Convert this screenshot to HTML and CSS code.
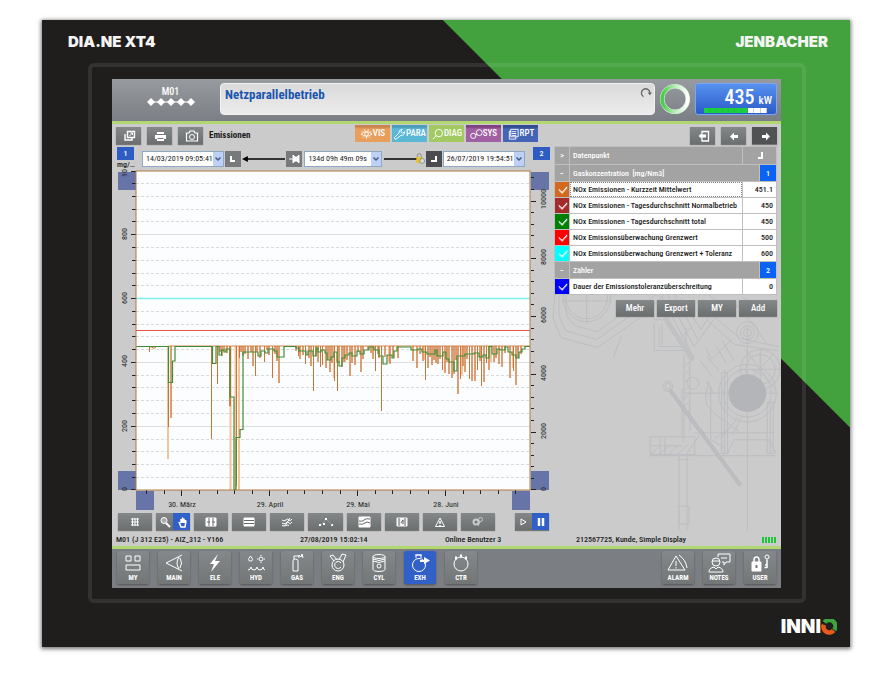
FILE: index.html
```html
<!DOCTYPE html>
<html lang="de">
<head>
<meta charset="utf-8">
<title>DIA.NE XT4</title>
<link rel="stylesheet" href="styles.css">
</head>
<body>
<div class="device">
  <header class="brand-bar"><span class="brand">DIA.NE XT4</span><span class="brand">JENBACHER</span></header>
  <div class="bezel">
    <main class="screen">
      <div class="topbar">
        <div class="module">
          <span>M01</span>
          <svg width="48" height="8" viewBox="0 0 48 8"><path d="M4 4H44" stroke="#fff"/><path fill="#fff" d="M4 0l4 4-4 4-4-4zM14 0l4 4-4 4-4-4zM24 0l4 4-4 4-4-4zM34 0l4 4-4 4-4-4zM44 0l4 4-4 4-4-4z"/></svg>
        </div>
        <div class="message"><span>Netzparallelbetrieb</span>
          <svg width="12" height="12" viewBox="0 0 12 12"><path d="M3.5 9.8A4.3 4.3 0 1 1 10 6" fill="none" stroke="#666" stroke-width="1.3"/><path d="M7.6 5.5h4.4L9.8 8.3z" fill="#666"/></svg>
        </div>
        <svg class="ring" viewBox="0 0 32 32"><defs><linearGradient id="rg"><stop offset="0" stop-color="#3fce3f"/><stop offset=".5" stop-color="#b9ecba"/><stop offset="1" stop-color="#fff"/></linearGradient></defs><circle cx="16" cy="16" r="12.8" fill="none" stroke="#d5e5d5" stroke-width="4.6"/><circle cx="16" cy="16" r="12.8" fill="none" stroke="url(#rg)" stroke-width="3.4"/></svg>
        <div class="power">
          <div class="power-value">435 <small>kW</small></div>
          <div class="power-bar"><i></i><i></i><i></i><i></i><i></i><i></i><i></i><i class="off"></i><i class="off"></i><i class="off"></i></div>
        </div>
      </div>

      <div class="toolbar">
        <div class="tools">
          <button class="tool" aria-label="Fenster"><svg viewBox="0 0 24 16"><path d="M10.500 3.500h7v6h-7zM8 6v6h7v-2" fill="none" stroke="#fff" stroke-width="1.400"/><path d="M12.500 8l3-3M13.500 5h2v2" fill="none" stroke="#fff"/></svg></button>
          <button class="tool" aria-label="Drucken"><svg viewBox="0 0 24 16"><path d="M9 4h7v3H9zM7 7h11v4H7zM9 10h7v3H9z" fill="#fff"/><path d="M9 6.500h7M9.500 10.500h6" stroke="#777"/></svg></button>
          <button class="tool" aria-label="Foto"><svg viewBox="0 0 24 16"><path d="M7.500 5h2.500l1-2h4l1 2h2.500v8h-11z" fill="none" stroke="#fff" stroke-width="1.200"/><circle cx="13" cy="9" r="2.500" fill="none" stroke="#fff"/></svg></button>
          <h1>Emissionen</h1>
        </div>
        <nav class="tabs">
          <a href="#vis" class="vis"><svg viewBox="0 0 14 12"><path d="M1 6q6-5 12 0q-6 5-12 0zM2 3l1 1M5 1l.5 2M9 1l-.5 2M12 3l-1 1M3 10l1-1M7 11V9M11 10l-1-1"/><circle cx="7" cy="6" r="2"/></svg>VIS</a>
          <a href="#para" class="para"><svg viewBox="0 0 14 12"><path d="M1.500 10l5-5q-.5-3 2.500-4l1 0-1.500 2 .5 1.500 1.500.5 2-1.500q.5 4-4 4l-5 4q-2 .5-2-1.500z"/></svg>PARA</a>
          <a href="#diag" class="diag"><svg viewBox="0 0 14 12"><circle cx="8.500" cy="5" r="4"/><path d="M5.500 8L2 11.500"/></svg>DIAG</a>
          <a href="#sys" class="sys"><svg viewBox="0 0 14 12"><circle cx="3.500" cy="8" r="2.800"/><circle cx="10" cy="4.500" r="3.200"/><path d="M6 7l2-1"/></svg>SYS</a>
          <a href="#rpt" class="rpt"><svg viewBox="0 0 14 12"><path d="M4 1h8v8h-8zM4 3H2.500v8.500h7V9M5 3.500h5M5 5.500h5M5 7.500h5"/></svg>RPT</a>
        </nav>
        <div class="history">
          <button class="tool" aria-label="Verlassen"><svg viewBox="0 0 24 16"><path d="M11 5V3.500h6.500v9.500H11v-2" fill="none" stroke="#fff" stroke-width="1.300"/><path d="M7.500 8l4-3.500v2H15v3h-3.500v2z" fill="#fff"/></svg></button>
          <button class="tool" aria-label="Zurück"><svg viewBox="0 0 24 16"><path d="M8 8.500l4-4V7h4v3h-4v2.500z" fill="#fff"/></svg></button>
          <button class="tool dark" aria-label="Vor"><svg viewBox="0 0 24 16"><path d="M17 8.500l-4-4V7H9v3h4v2.500z" fill="#fff"/></svg></button>
        </div>
      </div>

      <div class="content">
        <svg class="engine" viewBox="545 290 236 245" aria-hidden="true">
          <g fill="none" stroke="#bcbdc0">
            <path d="M553 296l-2 24 8 20 37 10 44-31 24-23M557 298l0 20 7 15 31 9 38-27 22-19M563 300l2 18 8 10 23 6 30-22"/>
            <circle cx="585" cy="300" r="24"/><circle cx="585" cy="300" r="21"/><path d="M585 296v30M560 303h50"/>
            <path d="M659 296l34 64M666 296l27 53 20-27M673 296l24 46M680 300l20 32 17-28-20-16M690 330l-10 10M612 360l8-22"/>
            <path d="M653 322h16M653 326v27h32v-4h-27v-20M661 326v21M685 330v24l8 5M683 357v88M689 364v70M683 370l6-6M683 378l6-6M683 386l6-6M683 394l6-6M683 402l6-6M683 410l6-6M683 418l6-6"/>
            <path d="M705 350l6 12 20-20M700 364l12 16M706 359l12 14M716 350l10 16M722 344l12 20"/>
            <circle cx="692" cy="386" r="6"/>
            <path d="M706 322l28 25 43 6M712 318l28 23 38 8M723 320l10-14 18 12M740 310l26 35M742 300l25 9 10-8"/>
            <circle cx="747" cy="335" r="11"/><circle cx="747" cy="335" r="7"/><circle cx="747" cy="335" r="4"/>
            <circle cx="760" cy="372" r="20"/><circle cx="760" cy="372" r="15"/><path d="M745 352l30 40M774 356l-28 30M760 351v42M738 372h42"/>
            <circle cx="747" cy="396" r="29"/><circle cx="747" cy="396" r="24"/>
            <path d="M683 396h95M709 384q-6 12-3 24l12 12 20 14M706 384l7 12M747 330v205"/>
            <path d="M721 375h6v82h-6zM724 372v85M767 405h6v52h-6zM770 405v52M710 390v53l14 8M730 430l-16 12M738 420l-18 22M742 418l-10 20"/>
            <path d="M649 440h45v18h-45zM659 440v18M664 440v18M649 449h32M649 458l10-9M658 458l10-9M667 458l10-9M676 458l12-11M685 458l14-20M649 459h126M694 436h80M733 443h36l7 14M733 443l-6 14"/>
            <path d="M678 460v75M686 460v75M676 463h12M676 510h12v18h-10v-18M681 392v50"/>
            <circle cx="667" cy="389" r="5"/><circle cx="667" cy="389" r="3"/>
          </g>
          <circle cx="747" cy="396" r="19" fill="#b3b5b8"/>
          <path d="M669 393l71 96" stroke="#b9babd" stroke-width="4"/><path d="M669 393l71 96" stroke="#c1c2c4" stroke-width="1"/><path d="M664 320l28 43" stroke="#c0c1c3" stroke-width="5"/>
        </svg>

        <section class="trend">
          <div class="range">
            <div class="axis-tag"><button>1</button><span>mg/…</span></div>
            <div class="range-fields">
              <label class="combo"><select aria-label="Von"><option>14/03/2019 09:05:41</option></select><svg viewBox="0 0 10 14"><path d="M2.500 5.500L5 8l2.500-2.500"/></svg></label>
              <button class="mini" aria-label="Anfang"><svg viewBox="0 0 16 16"><path d="M6 5v5h4" fill="none" stroke="#fff" stroke-width="2"/></svg></button>
              <svg class="span-line" viewBox="0 0 44 16"><path d="M4 8H44" stroke="#000" stroke-width="1.400"/><path d="M0 8l6-3v6z"/></svg>
              <button class="mini" aria-label="Fixieren"><svg viewBox="0 0 16 16"><path d="M3 8h4M7 4l2 2h2l2-2v8l-2-2H9l-2 2z" fill="#fff" stroke="#fff"/></svg></button>
              <label class="combo mid"><select aria-label="Zeitspanne"><option>134d 09h 49m 09s</option></select><svg viewBox="0 0 10 14"><path d="M2.500 5.500L5 8l2.500-2.500"/></svg></label>
              <svg class="span-line" viewBox="0 0 44 16"><path d="M2 8H37" stroke="#000" stroke-width="1.400"/><path d="M36 6V4.500a2 2 0 0 1 4 0V9" fill="none" stroke="#888"/><rect x="35" y="6" width="5" height="6" fill="#e8c321"/><circle cx="41" cy="10" r="2.500" fill="#ddd" stroke="#777" stroke-width=".7"/></svg>
              <button class="mini dark" aria-label="Ende"><svg viewBox="0 0 16 16"><path d="M10 5v5H5" fill="none" stroke="#fff" stroke-width="2"/></svg></button>
              <label class="combo"><select aria-label="Bis"><option>26/07/2019 19:54:51</option></select><svg viewBox="0 0 10 14"><path d="M2.500 5.500L5 8l2.500-2.500"/></svg></label>
            </div>
            <div class="axis-tag"><button>2</button></div>
          </div>
          <svg class="chart" viewBox="112 168 442 344">
            <rect x="136" y="171" width="394" height="319" fill="#fbfdff"/>
            <path d="M136 234.500h394M136 298.500h394M136 362.500h394M136 426.500h394" stroke="#dedfe3"/>
            <path d="M136 183.500h394M136 196.500h394M136 209.500h394M136 221.500h394M136 247.500h394M136 260.500h394M136 273.500h394M136 285.500h394M136 311.500h394M136 324.500h394M136 336.500h394M136 349.500h394M136 375.500h394M136 387.500h394M136 400.500h394M136 413.500h394M136 439.500h394M136 451.500h394M136 464.500h394M136 477.500h394" stroke="#d9dadc" stroke-dasharray="3 2"/>
            <g fill="#6774a8"><path d="M118 172h18v18h-18zM118 471h18v19h-18zM136 491h18v19h-18zM531 172h18v18h-18zM531 471h18v19h-18zM512 491h18v19h-18z"/></g>
            <path d="M131 171.500h5M132 183.500h4M132 196.500h4M132 209.500h4M132 221.500h4M131 234.500h5M132 247.500h4M132 260.500h4M132 273.500h4M132 285.500h4M131 298.500h5M132 311.500h4M132 324.500h4M132 336.500h4M132 349.500h4M131 362.500h5M132 375.500h4M132 387.500h4M132 400.500h4M132 413.500h4M131 426.500h5M132 439.500h4M132 451.500h4M132 464.500h4M132 477.500h4M131 489.500h5" stroke="#222"/>
            <path d="M531 177.500h3M531 189.500h3M531 201.500h5M531 212.500h3M531 224.500h3M531 235.500h3M531 247.500h3M531 258.500h5M531 270.500h3M531 281.500h3M531 293.500h3M531 304.500h3M531 316.500h5M531 328.500h3M531 339.500h3M531 351.500h3M531 362.500h3M531 374.500h5M531 385.500h3M531 397.500h3M531 408.500h3M531 420.500h3M531 432.500h5M531 443.500h3M531 455.500h3M531 466.500h3M531 478.500h3M531 489.500h5" stroke="#222"/>
            <path d="M146.500 490v4M164.500 490v4M181.500 490v6M199.500 490v4M217.500 490v4M234.500 490v4M252.500 490v4M269.500 490v6M287.500 490v4M304.500 490v4M322.500 490v4M340.500 490v4M357.500 490v6M375.500 490v4M392.500 490v4M410.500 490v4M428.500 490v4M445.500 490v6M463.500 490v4M480.500 490v4M498.500 490v4M515.500 490v4" stroke="#222"/>
            <g class="tick-text" text-anchor="middle">
              <text transform="translate(127 173) rotate(-90)">10</text><text transform="translate(127 234) rotate(-90)">800</text><text transform="translate(127 298) rotate(-90)">600</text><text transform="translate(127 361) rotate(-90)">400</text><text transform="translate(127 426) rotate(-90)">200</text><text transform="translate(127 489) rotate(-90)">0</text>
              <text transform="translate(546 199) rotate(-90)">10000</text><text transform="translate(546 257) rotate(-90)">8000</text><text transform="translate(546 315) rotate(-90)">6000</text><text transform="translate(546 373) rotate(-90)">4000</text><text transform="translate(546 431) rotate(-90)">2000</text><text transform="translate(546 489) rotate(-90)">0</text>
              <text x="182" y="507">30. März</text><text x="270" y="507">29. April</text><text x="358" y="507">29. Mai</text><text x="446" y="507">28. Juni</text>
            </g>
            <path d="M136 298.500h394" stroke="#7ef0ee" stroke-width="1.500"/><path d="M136 330.500h394" stroke="#f0504f" stroke-width="1.200"/>
            <path d="M230.500 346V490M235.500 346V490M239 346V490M168 346V459M334 346V378M345 346V362M389 346V362M425 346V360M462 346V375M491 346V362M513 346V368" stroke="#f2c49c" stroke-width="2" fill="none"/>
            <path d="M136 346.500H149.500V352V347h3v1h3v-1.500H168.500V427V346H171V418V346H211.500V439V346H217.500V384V346H220V352V346H222V356V346H224V351V346H227V353V346H229.500V355V406H230.500V346H236.500V486V346H239.500V358V346H241V352V346H243V356V346H245V354V346H248V359V346H251V352V346H253V366V346H255.500V376V346H257V352V346H260V358V346H264.500V362V346H267V350V346H269V355V346H272.500V378V346H275V354V346H277V361V346H279V383V346H296V351V346H298.500V356V346H300V359V346H303V355V346H305.500V364V346H309V358V346H311V366V346H313.500V391V346H316V356V346H318V362V346H320.500V367V346H322.500V365V346H326V368V346H328V360V346H330V372V346H332V363V346H334.500V381V346H337.500V391V346H339V363V346H342V367V346H344V362V346H347V360V346H350V376V346H352V363V346H355V365V346H358V352V346H361V372V346H363V359V346H368V350V346H371V353V346H373V359V346H375.500V371V346H378V354V346H379V358V346H381.500V411V346H385V357V346H390V364V346H393V357V346H398V358V346H413V361V346H417V368V346H420V354V346H423V361V346H425.500V380V346H428V368V346H430V357V346H432V365V346H434V360V346H436V363V346H438V364V346H440V359V346H442.500V370V346H445V373V346H447V362V346H449V374V346H452V378V346H454V374V346H456V360V346H458V394V346H460.500V379V346H463V366V346H465V372V346H467V359V346H469.500V379V346H472V381V346H475V381V346H477.500V370V346H480V361V346H481.500V386V346H484V382V346H486.500V363V346H489V370V346H494V362V346H496V358V346H499V364V346H502V367V346H505V353V346H510V378V346H513.500V371V346H516V385V346H518V358V346H521V354V346H530" stroke="#cd7130" stroke-opacity=".85" fill="none"/>
            <path d="M136 346.500H168.500V382.500H172.500V361H175V346.500H212.500V363.500H216V346.500H219V355H221.500V350H224V352H226V349H230V397H234V489.500H236V437.500H240V429.500H243V352H258V356H261V351H265V353H268V349H274V351H277V357H284V346.500H296V348H299V351H306V355H308V351H313V356H316V348H318V352H321V350H325V353H327V360H331V357H334V352H337V362H339V366H342V358H345V355H349V353H352V356H357V351H360V354H364V350H369V347H374V350H379V356H383V364H387V355H392V358H394V351H397V347H411V350H418V349H422V352H427V354H435V350H437V356H443V352H446V359H449V362H454V371H457V356H465V354H474V353H479V357H483V355H486V358H489V346.500H492V354H497V349H500V350H505V347H508V352H512V355H516V358H519V352H522V349H525V346.500H530" stroke="#3f8d35" stroke-width="1.200" fill="none"/>
            <rect x="136" y="171" width="394" height="319" fill="none" stroke="#ae7b45"/>
          </svg>
          <div class="chart-tools">
            <button aria-label="Raster"><svg viewBox="0 0 16 12"><path d="M4 3h8M4 6h8M4 9h8M5.500 2v8M8 2v8M10.500 2v8"/></svg></button>
            <span class="pair"><button aria-label="Zoom"><svg viewBox="0 0 16 12"><path d="M9 7l4 4" stroke-width="2"/><circle cx="7" cy="4.500" r="3" fill="#aaa"/></svg></button><button class="on" aria-label="Verschieben"><svg viewBox="0 0 16 12"><path d="M5 6l2 5h4l1-6M7 7V3M8.500 7V1.500M10 7V2.500M11.500 7V4" stroke-width="1.500"/></svg></button></span>
            <button aria-label="Breite"><svg viewBox="0 0 16 12"><path d="M3 2h10v8H3z" fill="#fff"/><path d="M6 2v8M10 2v8M4 6h3M9 6h3" stroke="#666"/></svg></button>
            <button aria-label="Höhe"><svg viewBox="0 0 16 12"><path d="M3 2h10v8H3z" fill="#fff"/><path d="M3 4.500h10M3 7.500h10" stroke="#666"/></svg></button>
            <button aria-label="Kurven"><svg viewBox="0 0 16 12"><path d="M3 4q2 2 4 0t3 0 3-1M3 7q2 2 4 0t3 0 3-1M3 9.500q2 1 4 0t3 0M11 2L6 10"/></svg></button>
            <button aria-label="Punkte"><svg viewBox="0 0 16 12"><path d="M1 9h2M7 3h2M5 8h2M13 9h2" stroke-width="2"/><path d="M3 9l4-5M9 4l5 5" stroke="#aaa" stroke-width=".6"/></svg></button>
            <button aria-label="Verläufe"><svg viewBox="0 0 16 12"><path d="M3 1h11v10H3z" fill="#fff"/><path d="M3 5q3 1 5-1t6-1M3 8q4 1 6-1t5 0" stroke="#666" fill="none"/></svg></button>
            <button aria-label="Film"><svg viewBox="0 0 16 12"><path d="M3 2h10v8H3z" fill="#eee"/><path d="M5 2v8M11 2v8M7 7l2-3v4" stroke="#666"/></svg></button>
            <button aria-label="Warnung"><svg viewBox="0 0 16 12"><path d="M8 2l4.500 8.500h-9z"/><path d="M8 5v3M8 9v1" stroke-width="1.500"/></svg></button>
            <button class="faded" aria-label="Schlüssel"><svg viewBox="0 0 16 12"><circle cx="6" cy="6" r="2.500" stroke-width="2"/><circle cx="10.500" cy="3.500" r="2"/><path d="M8 10l2-4"/></svg></button>
            <span class="pair play"><button aria-label="Start"><svg viewBox="0 0 16 12"><path d="M6 3l5 3-5 3z"/></svg></button><button class="on" aria-label="Pause"><svg viewBox="0 0 16 12"><path d="M6 2v8M10 2v8" stroke-width="2.500"/></svg></button></span>
          </div>
        </section>

        <section class="points">
          <table>
            <thead><tr class="group"><th class="c">&gt;</th><th>Datenpunkt</th><th class="c" colspan="2"><svg class="corner" viewBox="0 0 8 8"><path d="M6 0v6H2"/></svg></th></tr></thead>
            <tbody>
              <tr class="group"><th class="c">−</th><th colspan="2">Gaskonzentration &nbsp;[mg/Nm3]</th><th class="num">1</th></tr>
              <tr><td><input class="o" type="checkbox" id="p1" checked></td><td class="focus"><label for="p1">NOx Emissionen - Kurzzeit Mittelwert</label></td><td colspan="2" class="v">451.1</td></tr>
              <tr><td><input class="br" type="checkbox" id="p2" checked></td><td><label for="p2">NOx Emissionen - Tagesdurchschnitt Normalbetrieb</label></td><td colspan="2" class="v">450</td></tr>
              <tr><td><input class="g" type="checkbox" id="p3" checked></td><td><label for="p3">NOx Emissionen - Tagesdurchschnitt total</label></td><td colspan="2" class="v">450</td></tr>
              <tr><td><input class="r" type="checkbox" id="p4" checked></td><td><label for="p4">NOx Emissionsüberwachung Grenzwert</label></td><td colspan="2" class="v">500</td></tr>
              <tr><td><input class="cy" type="checkbox" id="p5" checked></td><td><label for="p5">NOx Emissionsüberwachung Grenzwert + Toleranz</label></td><td colspan="2" class="v">600</td></tr>
              <tr class="group"><th class="c">−</th><th colspan="2">Zähler</th><th class="num">2</th></tr>
              <tr><td><input class="b" type="checkbox" id="p6" checked></td><td><label for="p6">Dauer der Emissionstoleranzüberschreitung</label></td><td colspan="2" class="v">0</td></tr>
            </tbody>
          </table>
          <div class="actions"><button>Mehr</button><button>Export</button><button>MY</button><button>Add</button></div>
        </section>
      </div>

      <div class="status"><span>M01 (J 312 E25) - AIZ_312 - Y166</span><span>27/08/2019 15:02:14</span><span>Online Benutzer 3</span><span>212567725, Kunde, Simple Display</span><span class="signal"><i></i><i></i><i></i><i></i><i></i></span></div>

      <nav class="dock">
        <button><svg viewBox="0 0 24 20"><path d="M5 3h5v5H5zM14 3h5v5h-5zM5 12h14v5H5z"/></svg>MY</button>
        <button><svg viewBox="0 0 24 20"><path d="M20 2L4 10l16 8M17 4q-4 6 0 12M18 5q3 5 0 10"/></svg>MAIN</button>
        <button><svg viewBox="0 0 24 20"><path d="M15 1L7 11h4l-3 8 9-11h-5z" fill="#fff" stroke="none"/></svg>ELE</button>
        <button><svg viewBox="0 0 24 20"><path d="M6.500 3q-4 5 0 5t0-5zM4 17q2.500 0 3-3 .5 3 3 3t3-3q.5 3 3 3t3-3q.5 3 2 3"/><circle cx="17" cy="6" r="2"/><path d="M17 2v1M17 9v1M13 6h1M20 6h1"/></svg>HYD</button>
        <button><svg viewBox="0 0 24 20"><path d="M8 18V8q0-2 2.500-2T13 8v10zM9 6V3h5M14 5V2l2 2 1-3 1 4"/></svg>GAS</button>
        <button><svg viewBox="0 0 24 20"><circle cx="12" cy="12" r="6"/><path d="M15 10a3.500 3.500 0 1 0 0 4M8 8L4 3l3-1 4 5M13 7l3-6 4 1-3 7"/></svg>ENG</button>
        <button><svg viewBox="0 0 24 20"><ellipse cx="12" cy="3.500" rx="6" ry="2"/><path d="M6 3.500v13q0 2 6 2t6-2v-13M6 6q6 3 12 0M6 8q6 3 12 0"/><circle cx="12" cy="13" r="2"/></svg>CYL</button>
        <button class="on"><svg viewBox="0 0 24 20"><circle cx="11" cy="12" r="6.500"/><path d="M8 5V2h5v3M7 2h7"/><path d="M12 7h4V4l6 3.500-6 3.500V9h-4z" fill="#fff" stroke="none"/></svg>EXH</button>
        <button><svg viewBox="0 0 24 20"><circle cx="12" cy="11" r="7"/><path d="M6 5h2M11 3h2M16 5h2" stroke-width="3"/></svg>CTR</button>
        <button class="push"><svg viewBox="0 0 24 20"><path d="M10 3L2 17h17zM10 8v5M10 14v1.500M13 2q7 5 8 13"/></svg>ALARM</button>
        <button><svg viewBox="0 0 24 20"><circle cx="9" cy="9" r="4"/><path d="M2 19q0-4 5-5l2 2 2-2q5 1 5 5zM5 8h8M11 4V1h12v8h-4l-2 3V9h-2M14 5h6"/></svg>NOTES</button>
        <button><svg viewBox="0 0 24 20"><path d="M4 9h9v9H4z" fill="#fff"/><path d="M6 9V7q0-3 2.500-3T11 7v2" stroke-width="1.500"/><path d="M8.500 12v3" stroke="#777" stroke-width="2"/><circle cx="19" cy="4" r="2"/><path d="M19 6.500V15M19 14.500h-2.500M19 12h-2" stroke-width="1.500"/></svg>USER</button>
      </nav>
    </main>
  </div>
  <footer class="maker"><span>INNI</span><svg viewBox="0 0 14 14"><path d="M3 3A5 5 0 0 1 11.500 9.500" fill="none" stroke="#3fa33c" stroke-width="4"/><path d="M11 10A5 5 0 0 1 2.500 5" fill="none" stroke="#e85a1c" stroke-width="4"/></svg></footer>
</div>
</body>
</html>
```
FILE: styles.css
```css
* { box-sizing: border-box; }
body { margin: 0; padding: 20px 45px 28px 42px; background: #fff; font: 500 8px/11px "Roboto Condensed", "Liberation Sans Narrow", Roboto, sans-serif; color: #1b1b1b; }
button, select, input { font: inherit; margin: 0; padding: 0; border: 0; border-radius: 0; color: inherit; }
button { display: flex; align-items: center; justify-content: center; }
svg { display: block; flex: none; }

.device { position: relative; background: #1f1e1c; box-shadow: 0 1px 4px 1px #777; isolation: isolate; }
.device::before { content: ""; position: absolute; inset: 0; z-index: -1; background: #43a13e; clip-path: polygon(49.6% 0, 100% 0, 100% 65%); }
.brand-bar { height: 43px; padding: 0 22px 0 26px; display: flex; justify-content: space-between; align-items: center; }
.brand { font: 900 15px/16px Inter, sans-serif; color: #f4f4f4; }
.bezel { margin: 0 44px 0 46px; padding: 12px 21px 11px 20px; border: 4px solid rgba(255,255,255,.09); border-radius: 6px; }
.screen { background: #cbcbcb; }
.maker { height: 44px; padding: 4px 13px 0 0; display: flex; justify-content: flex-end; align-items: center; color: #fff; font: 900 19px/20px Inter, sans-serif; }
.maker svg { width: 16px; height: 16px; }

.topbar { height: 45px; padding: 4px 4px 6px; display: flex; background: linear-gradient(#979a9e, #7b7e84); border-bottom: 3px solid #b2d670; }
.module { width: 104px; display: flex; flex-direction: column; align-items: center; gap: 1px; padding: 3px 0 0 5px; color: #fff; font-size: 10px; }
.message { flex: 1; display: flex; justify-content: space-between; padding: 3px 2px 0 4px; border: 1px solid #f1f1f1; border-radius: 4px; background: linear-gradient(#dadada, #ececec); color: #1b55b0; font-size: 13px; line-height: 16px; font-weight: 700; }
.ring { width: 32px; height: 32px; margin: 0 4px; }
.power { width: 82px; padding: 2px 4px 2px 8px; border: 1px solid #79a7f2; border-radius: 3px; background: linear-gradient(#5791f0, #2a5bc8); color: #fff; }
.power-value { display: flex; justify-content: flex-end; align-items: baseline; gap: 4px; height: 22px; font-size: 20px; line-height: 22px; }
.power-value small { font-size: 11px; }
.power-bar { display: flex; margin-right: 5px; }
.power-bar i { flex: 1; height: 5px; background: #19d23a; border-right: 1px solid #31b258; }
.power-bar .off { background: #fff; border-color: #ccd; }

.toolbar { display: grid; grid-template-columns: 36% auto 1fr; height: 22px; padding: 1px 4px 0; }
.tools, .history { display: flex; align-items: center; gap: 6px; }
.history { justify-content: flex-end; }
.tool { width: 25px; height: 17px; background: linear-gradient(#858889, #6c6f70); box-shadow: 0 1px 1px #777; }
.tool svg { width: 24px; height: 16px; }
.tool.dark { background: #515253; }
h1 { margin: 0; font-size: 9px; font-weight: 700; }
.tabs { display: flex; gap: 2px; padding-left: 1px; }
.tabs a { width: 35px; height: 17px; display: flex; align-items: center; justify-content: center; color: #fff; font-size: 9px; font-weight: 500; text-decoration: none; }
.tabs svg { width: 13px; height: 12px; fill: none; stroke: #fff; }
.vis { background: linear-gradient(#c88550 2px, #e89f5b 4px); }
.para { background: linear-gradient(#4b9cb9 2px, #5bb7d6 4px); }
.diag { background: #a3ca62; }
.sys { background: linear-gradient(#7f4280 2px, #a160a3 4px); }
.rpt { background: linear-gradient(#334b91 2px, #4464b5 4px); }

.content { position: relative; display: grid; grid-template-columns: minmax(0, 442fr) minmax(0, 227fr); }
.engine { position: absolute; right: 0; bottom: 0; width: 35%; }
.trend, .points { position: relative; }
.range { height: 22px; display: flex; justify-content: space-between; padding: 1px 4px 0 5px; }
.axis-tag { width: 17px; }
.axis-tag button { width: 17px; height: 13px; background: #2e5cc2; color: #fff; }
.axis-tag span { display: block; line-height: 10px; }
.range-fields { flex: 1; display: flex; align-items: center; padding: 2px 8px 0 8px; }
.combo { position: relative; flex: 82; height: 16px; }
.combo.mid { flex: 77; margin-left: 1px; }
.combo select { appearance: none; width: 100%; height: 16px; padding-left: 3px; border: 1px solid #8fa9c4; background: #fff; font-weight: 400; }
.combo svg { position: absolute; right: 1px; top: 1px; width: 10px; height: 14px; background: #bfd0f7; fill: none; stroke: #445a8c; stroke-width: 1.5; pointer-events: none; }
.mini { width: 16px; height: 16px; background: #777a7b; margin: 0 1px; }
.mini.dark { background: #4b4c4d; }
.mini svg { width: 16px; height: 16px; }
.span-line { flex: 43; min-width: 0; height: 16px; }
.chart { width: 100%; overflow: visible; }
.tick-text { font-size: 8px; font-weight: 400; fill: #222; }
.chart-tools { display: flex; gap: 4px; padding: 1px 5px 0 6px; height: 19px; }
.chart-tools button, .pair { flex: 1; height: 17px; background: linear-gradient(#858889, #6c6f70); box-shadow: 0 1px 1px #777; }
.pair { display: flex; }
.pair button { box-shadow: none; }
.chart-tools .play { margin-left: 16px; }
.chart-tools .on, .dock .on { background: #3060c8; }
.chart-tools svg { width: 16px; height: 12px; fill: none; stroke: #fff; stroke-width: 1; }
.faded svg { opacity: .6; }

table { width: 100%; border-collapse: separate; border-spacing: 1px; table-layout: fixed; background: #bfbfbf; }
.points { padding: 0 4px 0 0; }
td, th { height: 15px; padding: 0 3px; background: #fff; text-align: left; white-space: nowrap; overflow: hidden; font-weight: 500; }
td:first-child, th:first-child { width: 14px; }
thead th:last-child { width: 33px; }
td:first-child { padding: 0; }
.group th { height: 16px; background: #a3a3a3; color: #fff; }
thead .group th { height: 17px; }
.group .c { text-align: center; padding: 0; }
.group .num { background: #0a63f5; text-align: center; }
.corner { width: 8px; height: 8px; margin: 0 auto; fill: none; stroke: #fff; stroke-width: 2; }
.v { text-align: right; }
.focus { outline: 1px dotted #888; outline-offset: -1px; }
input { appearance: none; display: block; width: 14px; height: 15px; padding: 4px 4px 0; }
input::before { content: ""; display: block; width: 7px; height: 4px; border: solid #fff; border-width: 0 0 1px 1px; outline: 0; box-shadow: -1px 1px 0 -0px rgba(255,255,255,.3); transform: rotate(-48deg); }
.o { background: #d2691e; } .br { background: #a52a2a; } .g { background: #008000; } .r { background: #f00; } .cy { background: #0ff; } .b { background: #00f; }
.actions { display: flex; justify-content: flex-end; gap: 3px; margin-top: 5px; }
.actions button { width: 38px; height: 16px; background: linear-gradient(#858889, #6c6f70); box-shadow: 0 1px 1px #777; color: #fff; font-size: 9px; }

.status { display: grid; grid-template-columns: 184fr 145fr 131fr 186fr 15fr; padding: 3px 4px 1px; height: 18px; align-items: center; border-bottom: 3px solid #b2d670; white-space: nowrap; }
.signal { display: flex; gap: 1px; }
.signal i { width: 2px; height: 6px; background: #1fc53b; }
.dock { display: flex; gap: 9px; padding: 2px 5px 4px; background: #7b7e82; }
.dock button { flex-direction: column; justify-content: flex-start; gap: 1px; width: 32px; height: 33px; padding-top: 2px; border-radius: 2px; background: linear-gradient(#85888a, #737677); box-shadow: 0 1px 2px #555; color: #fff; font-size: 7px; line-height: 9px; font-weight: 700; }
.dock svg { width: 24px; height: 20px; fill: none; stroke: #fff; stroke-width: 1; }
.push { margin-left: auto; }
```
